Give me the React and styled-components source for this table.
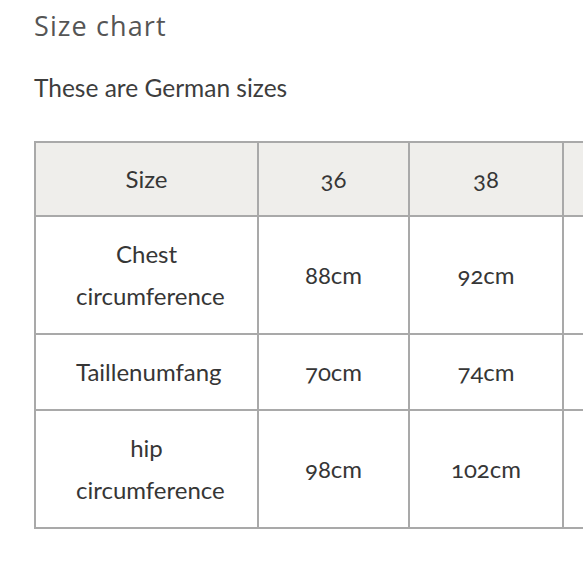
import styled, { createGlobalStyle } from 'styled-components';

const GlobalStyle = createGlobalStyle`
  html, body {
    margin: 0;
    padding: 0;
    background: #ffffff;
    overflow: hidden;
  }
`;

const sizes = ['36', '38', '40', '42', '44'];

const rows = [
  { label: 'Chest circumference', values: ['88cm', '92cm', '96cm', '100cm', '104cm'] },
  { label: 'Taillenumfang', values: ['70cm', '74cm', '78cm', '82cm', '86cm'] },
  { label: 'hip circumference', values: ['98cm', '102cm', '106cm', '110cm', '114cm'] },
];

const colWidths = [223, 151, 154, 154, 154, 154];

const App = () => {
  return (
    <Page>
      <GlobalStyle />
      <Heading>Size chart</Heading>
      <Intro>These are German sizes</Intro>
      <TableScroll>
        <Chart>
          <colgroup>
            {colWidths.map((w, i) => (
              <col key={i} style={{ width: w }} />
            ))}
          </colgroup>
          <thead>
            <tr>
              <HeadCell>Size</HeadCell>
              {sizes.map((s) => (
                <HeadCell key={s}>{s}</HeadCell>
              ))}
            </tr>
          </thead>
          <tbody>
            {rows.map((row) => (
              <tr key={row.label}>
                <LabelCell>{row.label}</LabelCell>
                {row.values.map((v, i) => (
                  <Cell key={i}>{v}</Cell>
                ))}
              </tr>
            ))}
          </tbody>
        </Chart>
      </TableScroll>
    </Page>
  );
};

export default App;

const Page = styled.div`
  padding: 8px 0 0 34px;
  font-family: Lato, "Open Sans", sans-serif;
  color: #3a3a3a;
`;

const Heading = styled.h2`
  margin: 0;
  font-family: "Open Sans", sans-serif;
  font-weight: 400;
  font-size: 27px;
  line-height: 36px;
  color: #555555;
  letter-spacing: 1.1px;
`;

const Intro = styled.p`
  margin: 28px 0 0;
  font-size: 24.5px;
  line-height: 32px;
  color: #3d3d3d;
  font-variant-numeric: oldstyle-nums;
`;

const TableScroll = styled.div`
  margin-top: 37px;
  overflow: hidden;
`;

const Chart = styled.table`
  border-collapse: collapse;
  table-layout: fixed;
  width: 990px;
  font-size: 24px;
  line-height: 42px;
  color: #363636;
  font-variant-numeric: oldstyle-nums;
`;

const HeadCell = styled.th`
  font-weight: 400;
  background: #efeeeb;
  border: 2px solid #a9a9a9;
  padding: 15px 16px;
  text-align: center;
  vertical-align: middle;
`;

const Cell = styled.td`
  border: 2px solid #a9a9a9;
  padding: 16px 16px;
  text-align: center;
  vertical-align: middle;
`;

const LabelCell = styled(Cell)`
  padding: 16px 40px;
`;
